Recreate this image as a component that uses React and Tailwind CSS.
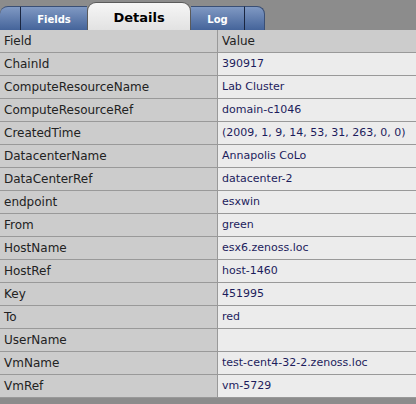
import React from "react";

const rows = [
  ["ChainId", "390917"],
  ["ComputeResourceName", "Lab Cluster"],
  ["ComputeResourceRef", "domain-c1046"],
  ["CreatedTime", "(2009, 1, 9, 14, 53, 31, 263, 0, 0)"],
  ["DatacenterName", "Annapolis CoLo"],
  ["DataCenterRef", "datacenter-2"],
  ["endpoint", "esxwin"],
  ["From", "green"],
  ["HostName", "esx6.zenoss.loc"],
  ["HostRef", "host-1460"],
  ["Key", "451995"],
  ["To", "red"],
  ["UserName", ""],
  ["VmName", "test-cent4-32-2.zenoss.loc"],
  ["VmRef", "vm-5729"],
];

export default function App() {
  return (
    <div
      className="w-[416px] h-[404px] bg-[#8c8c8c] overflow-hidden"
      style={{ fontFamily: '"DejaVu Sans", Verdana, sans-serif' }}
    >
      <div className="h-[30px] flex items-end">
        <div className="w-[21px] h-[24px] rounded-tl-[8px] bg-gradient-to-b from-[#8099c3] to-[#45649a] border-t border-[#3a4f75] border-r border-r-[#1a2640]" />
        <div className="w-[66px] h-[24px] bg-gradient-to-b from-[#8099c3] to-[#45649a] border-t border-[#3a4f75] flex items-center justify-center text-white font-bold text-[10px] pt-[2px]">
          Fields
        </div>
        <div className="w-[104px] h-[28px] rounded-t-[9px] bg-gradient-to-b from-[#f6f6f6] via-[#ececec] to-[#e2e2e2] border border-b-0 border-[#5a5a5a] flex items-start justify-center text-black font-bold text-[13px] pt-[5px]">
          Details
        </div>
        <div className="w-[54px] h-[24px] bg-gradient-to-b from-[#8099c3] to-[#45649a] border-t border-[#3a4f75] border-r border-r-[#1a2640] flex items-center justify-center text-white font-bold text-[10px] pt-[2px]">
          Log
        </div>
        <div className="w-[20px] h-[24px] rounded-tr-[8px] bg-gradient-to-b from-[#8099c3] to-[#45649a] border-t border-r border-[#3a4f75]" />
      </div>
      <div className="grid grid-cols-[218px_1fr] bg-[#8c8c8c]">
        <div className="h-[23px] bg-[#cccccc] border-b border-r border-[#999999] flex items-center pl-[4px] text-[12px] text-[#222]">
          Field
        </div>
        <div className="h-[23px] bg-[#cccccc] border-b border-[#999999] flex items-center pl-[4px] text-[12px] text-[#222]">
          Value
        </div>
        {rows.map(([k, v]) => (
          <React.Fragment key={k}>
            <div className="h-[23px] bg-[#cccccc] border-b border-r border-[#999999] flex items-center pl-[4px] text-[12px] text-[#222]">
              {k}
            </div>
            <div className="h-[23px] bg-[#ececec] border-b border-[#999999] flex items-center pl-[4px] text-[11px] text-[#1c1c5c]">
              {v}
            </div>
          </React.Fragment>
        ))}
      </div>
    </div>
  );
}
